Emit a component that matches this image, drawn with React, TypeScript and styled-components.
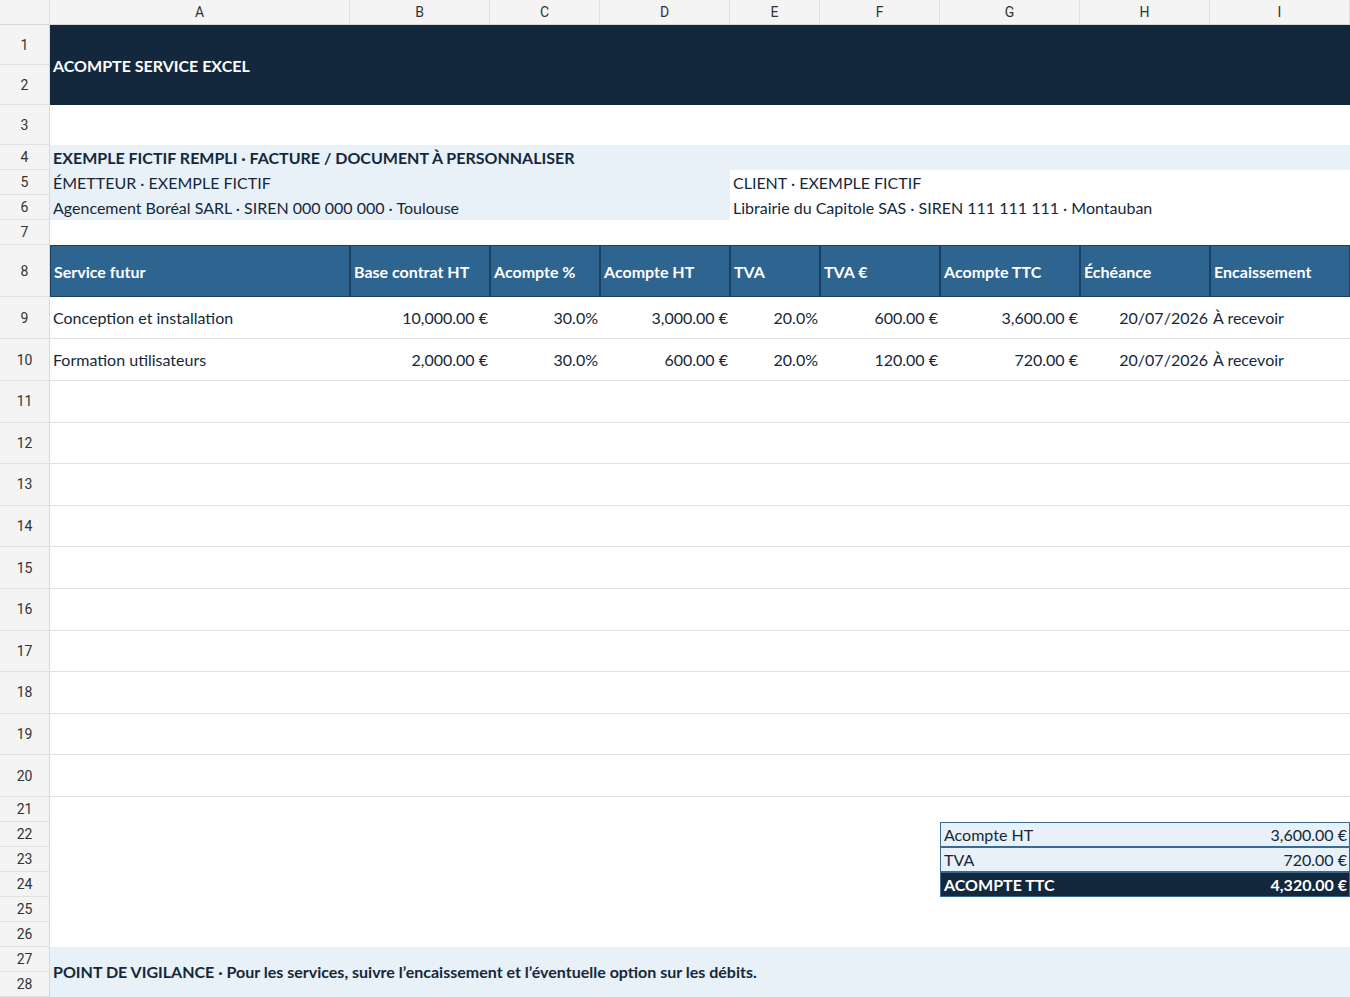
import React from "react";
import styled, { createGlobalStyle } from "styled-components";

const Global = createGlobalStyle`
  html, body { margin: 0; padding: 0; background: #fff; }
  body { font-family: Lato, "Noto Sans", sans-serif; color: #15283a; }
`;

const rowHeights = [25, 40, 40, 40, 25, 25, 25, 25, 52, 42, 42,
  41.6, 41.6, 41.6, 41.6, 41.6, 41.6, 41.6, 41.6, 41.6, 41.6,
  25, 25, 25, 25, 25, 25, 25, 25];

const Sheet = styled.div`
  display: grid;
  width: 1350px;
  grid-template-columns: 50px 300px 140px 110px 130px 90px 120px 140px 130px 140px;
  grid-template-rows: ${rowHeights.map((h) => h + "px").join(" ")};
  overflow: hidden;
`;

const ColHead = styled.div<{ $c: number }>`
  grid-row: 1; grid-column: ${(p) => p.$c};
  background: #f4f4f4; border-right: 1px solid #e0e0e0; border-bottom: 1px solid #d8d8d8;
  font-family: Roboto, "Liberation Sans", sans-serif; font-size: 14px; color: #333;
  display: flex; align-items: center; justify-content: center;
`;

const RowHead = styled.div<{ $r: number }>`
  grid-column: 1; grid-row: ${(p) => p.$r};
  background: #f4f4f4; border-bottom: 1px solid #e0e0e0; border-right: 1px solid #d8d8d8;
  font-family: Roboto, "Liberation Sans", sans-serif; font-size: 14px; color: #333;
  display: flex; align-items: center; justify-content: center;
`;

const Cell = styled.div<{
  $r: string; $c: string; $bg?: string; $fg?: string; $bold?: boolean;
  $right?: boolean; $line?: boolean; $border?: string; $size?: number;
}>`
  grid-row: ${(p) => p.$r}; grid-column: ${(p) => p.$c};
  background: ${(p) => p.$bg || "transparent"};
  color: ${(p) => p.$fg || "#15283a"};
  font-weight: ${(p) => (p.$bold ? 700 : 400)};
  font-size: ${(p) => p.$size || 16}px;
  display: flex; align-items: center;
  justify-content: ${(p) => (p.$right ? "flex-end" : "flex-start")};
  padding: 0 2px 0 3px; box-sizing: border-box; white-space: nowrap; overflow: hidden;
  ${(p) => (p.$line ? "border-bottom: 1px solid #dbe2ea;" : "")}
  ${(p) => (p.$border ? `border: 1px solid ${p.$border};` : "")}
`;

const Split = styled(Cell)`
  justify-content: space-between;
`;

const cols = ["A", "B", "C", "D", "E", "F", "G", "H", "I"];
const headers = ["Service futur", "Base contrat HT", "Acompte %", "Acompte HT", "TVA", "TVA €", "Acompte TTC", "Échéance", "Encaissement"];
const data = [
  ["Conception et installation", "10,000.00 €", "30.0%", "3,000.00 €", "20.0%", "600.00 €", "3,600.00 €", "20/07/2026", "À recevoir"],
  ["Formation utilisateurs", "2,000.00 €", "30.0%", "600.00 €", "20.0%", "120.00 €", "720.00 €", "20/07/2026", "À recevoir"],
];

export default function App() {
  const LB = "#e8f0f8";
  return (
    <>
      <Global />
      <Sheet>
        <ColHead $c={1} />
        {cols.map((c, i) => <ColHead key={c} $c={i + 2}>{c}</ColHead>)}
        {Array.from({ length: 28 }, (_, i) => <RowHead key={i} $r={i + 2}>{i + 1}</RowHead>)}

        <Cell $r="2 / 4" $c="2 / 11" $bg="#13283c" $fg="#fff" $bold>ACOMPTE SERVICE EXCEL</Cell>
        <Cell $r="5" $c="2 / 11" $bg={LB} $bold>EXEMPLE FICTIF REMPLI · FACTURE / DOCUMENT À PERSONNALISER</Cell>
        <Cell $r="6" $c="2 / 6" $bg={LB}>ÉMETTEUR · EXEMPLE FICTIF</Cell>
        <Cell $r="7" $c="2 / 6" $bg={LB}>Agencement Boréal SARL · SIREN 000 000 000 · Toulouse</Cell>
        <Cell $r="6" $c="6 / 11">CLIENT · EXEMPLE FICTIF</Cell>
        <Cell $r="7" $c="6 / 11">Librairie du Capitole SAS · SIREN 111 111 111 · Montauban</Cell>

        {headers.map((h, i) => (
          <Cell key={h} $r="9" $c={`${i + 2}`} $bg="#2e6490" $fg="#fff" $bold $border="#1d3f5e">{h}</Cell>
        ))}
        {data.map((row, ri) =>
          row.map((v, ci) => (
            <Cell key={ri + "-" + ci} $r={`${ri + 10}`} $c={`${ci + 2}`} $right={ci > 0 && ci < 8} $line>{v}</Cell>
          ))
        )}
        {Array.from({ length: 10 }, (_, i) => <Cell key={"e" + i} $r={`${i + 12}`} $c="2 / 11" $line />)}

        <Split $r="23" $c="8 / 11" $bg={LB} $border="#3a6a94"><span>Acompte HT</span><span>3,600.00 €</span></Split>
        <Split $r="24" $c="8 / 11" $bg={LB} $border="#3a6a94"><span>TVA</span><span>720.00 €</span></Split>
        <Split $r="25" $c="8 / 11" $bg="#13283c" $fg="#fff" $bold $border="#3a6a94"><span>ACOMPTE TTC</span><span>4,320.00 €</span></Split>

        <Cell $r="28 / 30" $c="2 / 11" $bg={LB} $bold>POINT DE VIGILANCE · Pour les services, suivre l’encaissement et l’éventuelle option sur les débits.</Cell>
      </Sheet>
    </>
  );
}
